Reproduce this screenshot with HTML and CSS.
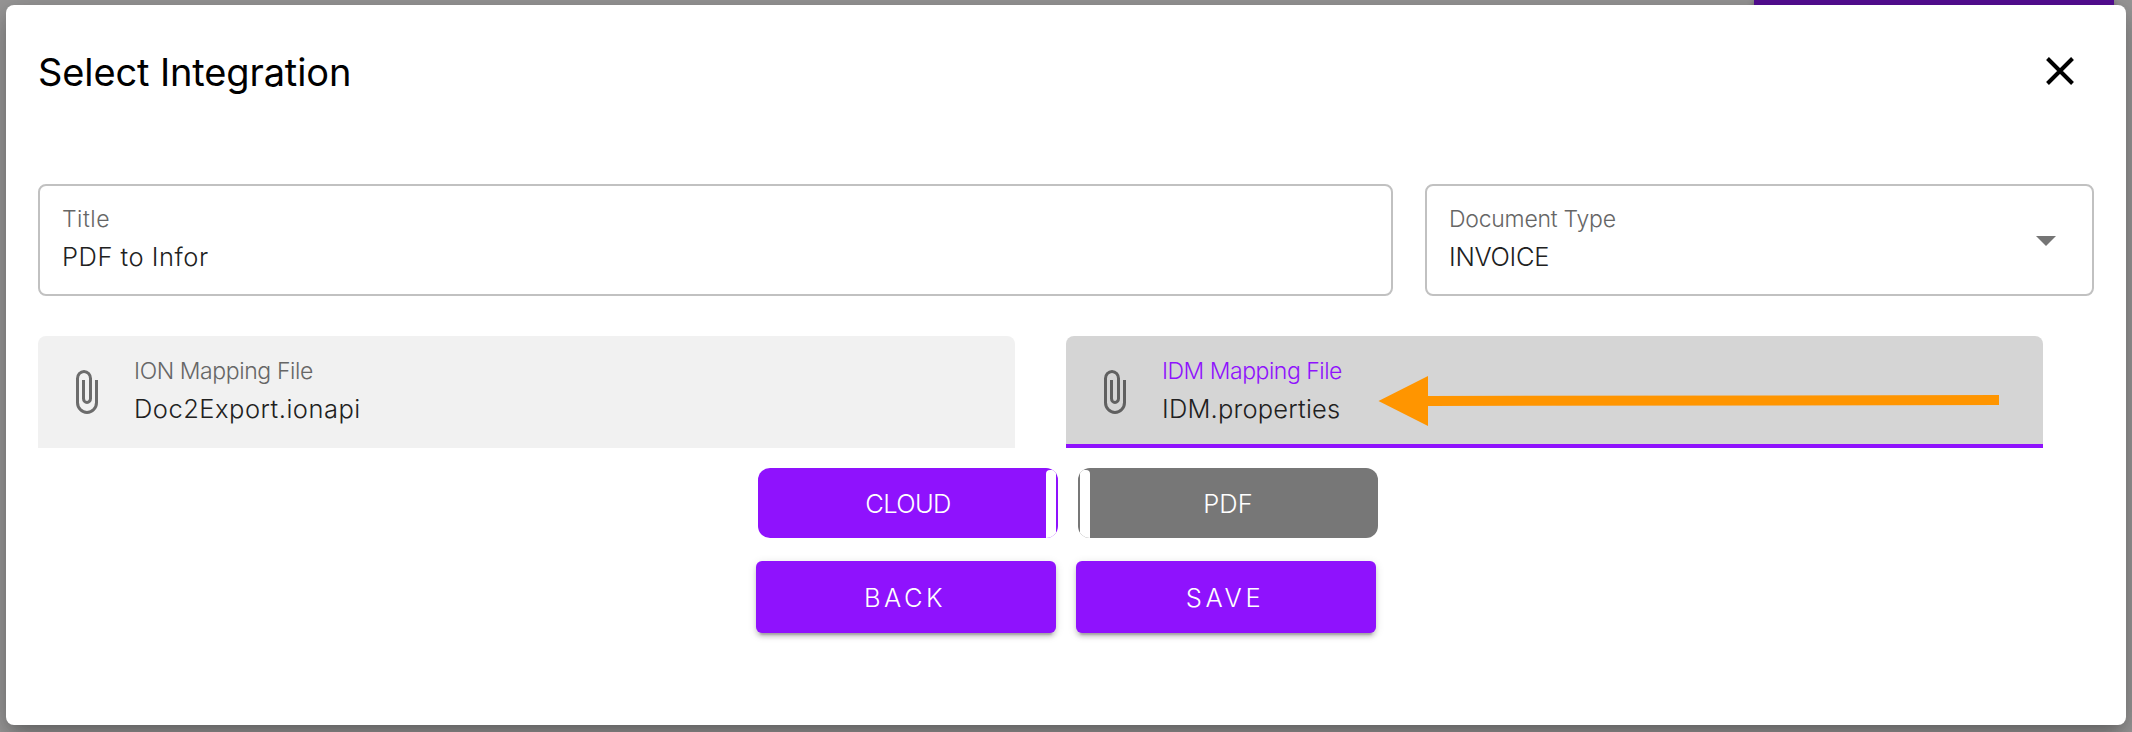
FILE: index.html
```html
<!DOCTYPE html>
<html lang="en">
<head>
<meta charset="utf-8">
<title>Select Integration</title>
<link rel="stylesheet" href="styles.css">
</head>
<body>
<div class="page-accent"></div>
<main class="dialog">
  <header class="dialog-header">
    <h1 class="dialog-title">Select Integration</h1>
    <svg class="close" viewBox="0 0 28 28"><path d="M1.500 1.500 26.500 26.500M26.500 1.500 1.500 26.500"/></svg>
  </header>
  <div class="row fields">
    <div class="field outlined title-field">
      <span class="label t-title">Title</span>
      <span class="value t-pdfinfor">PDF to Infor</span>
    </div>
    <div class="field outlined type-field">
      <span class="label t-doctype">Document Type</span>
      <span class="value t-invoice">INVOICE</span>
      <svg class="caret" viewBox="0 0 20 10"><path d="M0 0h20L10 10z"/></svg>
    </div>
  </div>
  <div class="row files">
    <div class="field file">
      <svg class="clip" viewBox="0 0 22 44"><path d="M20.500 10V32.500A9.500 10 0 0 1 1.500 32.500V8.500A6.500 7 0 0 1 14.500 8.500V28.500A3.500 4 0 0 1 7.500 28.500V10"/></svg>
      <div class="file-text">
        <span class="label t-ion">ION Mapping File</span>
        <span class="value t-doc">Doc2Export.ionapi</span>
      </div>
    </div>
    <div class="field file active">
      <svg class="clip" viewBox="0 0 22 44"><path d="M20.500 10V32.500A9.500 10 0 0 1 1.500 32.500V8.500A6.500 7 0 0 1 14.500 8.500V28.500A3.500 4 0 0 1 7.500 28.500V10"/></svg>
      <div class="file-text">
        <span class="label t-idm">IDM Mapping File</span>
        <span class="value t-prop">IDM.properties</span>
      </div>
      <svg class="arrow" viewBox="0 0 622 52"><path d="M0.500 26 50 1V21L621 20V30L50 31V51Z"/></svg>
    </div>
  </div>
  <div class="row toggles">
    <div class="toggle cloud"><span class="t-cloud">CLOUD</span></div>
    <div class="toggle pdf"><span class="t-pdf">PDF</span></div>
  </div>
  <div class="row actions">
    <button class="action"><span class="t-back">BACK</span></button>
    <button class="action"><span class="t-save">SAVE</span></button>
  </div>
</main>
</body>
</html>
```
FILE: styles.css
```css
* { box-sizing: border-box; }
body {
  margin: 0;
  height: 732px;
  padding: 5px 6px 7px;
  overflow: hidden;
  position: relative;
  background: #989797;
  font-family: Inter, "Open Sans", sans-serif;
  font-weight: 260;
}
.page-accent {
  position: absolute;
  top: 0;
  left: 1754px;
  width: 360px;
  height: 12px;
  background: #560e96;
  box-shadow: 0 2px 6px rgba(0,0,0,.4);
}
.dialog {
  position: relative;
  height: 720px;
  padding: 0 32px;
  border-radius: 8px;
  background: #fff;
  box-shadow: 0 11px 15px -7px rgba(0,0,0,.2), 0 12px 38px 3px rgba(0,0,0,.14), 0 5px 20px 2px rgba(0,0,0,.12);
}
.dialog-header {
  display: flex;
  justify-content: space-between;
  height: 179px;
  padding: 40px 20px 0 0;
}
.dialog-title {
  margin: 0;
  font-size: 38px;
  line-height: 54px;
  font-weight: 400;
  color: #000;
  letter-spacing: -0.120px;
}
.close {
  width: 28px;
  height: 28px;
  margin-top: 12px;
  fill: none;
  stroke: #000;
  stroke-width: 4;
}
.row { display: flex; }
.fields { gap: 32px; }
.field {
  position: relative;
  height: 112px;
}
.outlined {
  display: flex;
  flex-direction: column;
  padding: 14px 22px;
  border: 2px solid #c1c1c1;
  border-radius: 8px;
}
.title-field { width: 1355px; }
.type-field { width: 669px; }
.label, .value {
  display: block;
  white-space: nowrap;
}
.label {
  height: 38px;
  font-size: 23px;
  line-height: 38px;
  color: #666;
}
.value {
  height: 38px;
  font-size: 25.500px;
  line-height: 38px;
  font-weight: 280;
  color: #212121;
}
.caret {
  position: absolute;
  top: 50px;
  right: 36px;
  width: 20px;
  height: 10px;
  fill: #757575;
}
.files { gap: 51px; padding-top: 40px; }
.file {
  display: flex;
  width: 977px;
  padding: 16px 0 0 38px;
  border-radius: 8px 8px 0 0;
  background: #f1f1f1;
}
.active {
  background: #d5d5d5;
  border-bottom: 4px solid #8f12fd;
}
.active .label { color: #8f12fd; }
.clip {
  width: 22px;
  height: 44px;
  margin-top: 18px;
  fill: none;
  stroke: #6c6c6c;
  stroke-width: 3;
}
.active .clip { stroke: #606060; }
.file-text { margin-left: 36px; }
.arrow {
  position: absolute;
  left: 312px;
  top: 39px;
  width: 622px;
  height: 52px;
  fill: #ff9500;
}
.toggles {
  gap: 20px;
  padding: 20px 0 0 720px;
}
.toggle {
  position: relative;
  width: 300px;
  height: 70px;
  border-radius: 12px;
  overflow: hidden;
  color: #fff;
  font-size: 25.500px;
  line-height: 71px;
  text-align: center;
}
.cloud { background: #8f12fd; }
.pdf { background: #777; }
.toggle::after {
  content: "";
  position: absolute;
  top: 2px;
  width: 10px;
  height: 68px;
  border-radius: 4px 4px 0 0;
  background: #fff;
}
.cloud::after { right: 2px; }
.pdf::after { left: 2px; }
.actions {
  gap: 20px;
  padding: 23px 0 0 718px;
}
.action {
  width: 300px;
  height: 72px;
  padding: 2px 0 0;
  border: 0;
  border-radius: 6px;
  background: #8f12fd;
  box-shadow: 0 6px 2px -4px rgba(0,0,0,.2), 0 4px 4px rgba(0,0,0,.14), 0 2px 10px rgba(0,0,0,.12);
  color: #fff;
  font: 260 25.500px/70px Inter, "Open Sans", sans-serif;
}
/* Tracking per string */
.t-title { letter-spacing: 0.500px; }
.t-pdfinfor { letter-spacing: 0.520px; }
.t-doctype { letter-spacing: -0.250px; }
.t-invoice { letter-spacing: -0.300px; }
.t-ion { letter-spacing: -0.400px; }
.t-doc { letter-spacing: 0.500px; }
.t-idm { letter-spacing: -0.480px; }
.t-prop { letter-spacing: 0.200px; }
.t-cloud { letter-spacing: -0.620px; }
.t-back { letter-spacing: 3.500px; margin-right: 2px; }
.t-save { letter-spacing: 3.700px; margin-right: 2px; }
```
